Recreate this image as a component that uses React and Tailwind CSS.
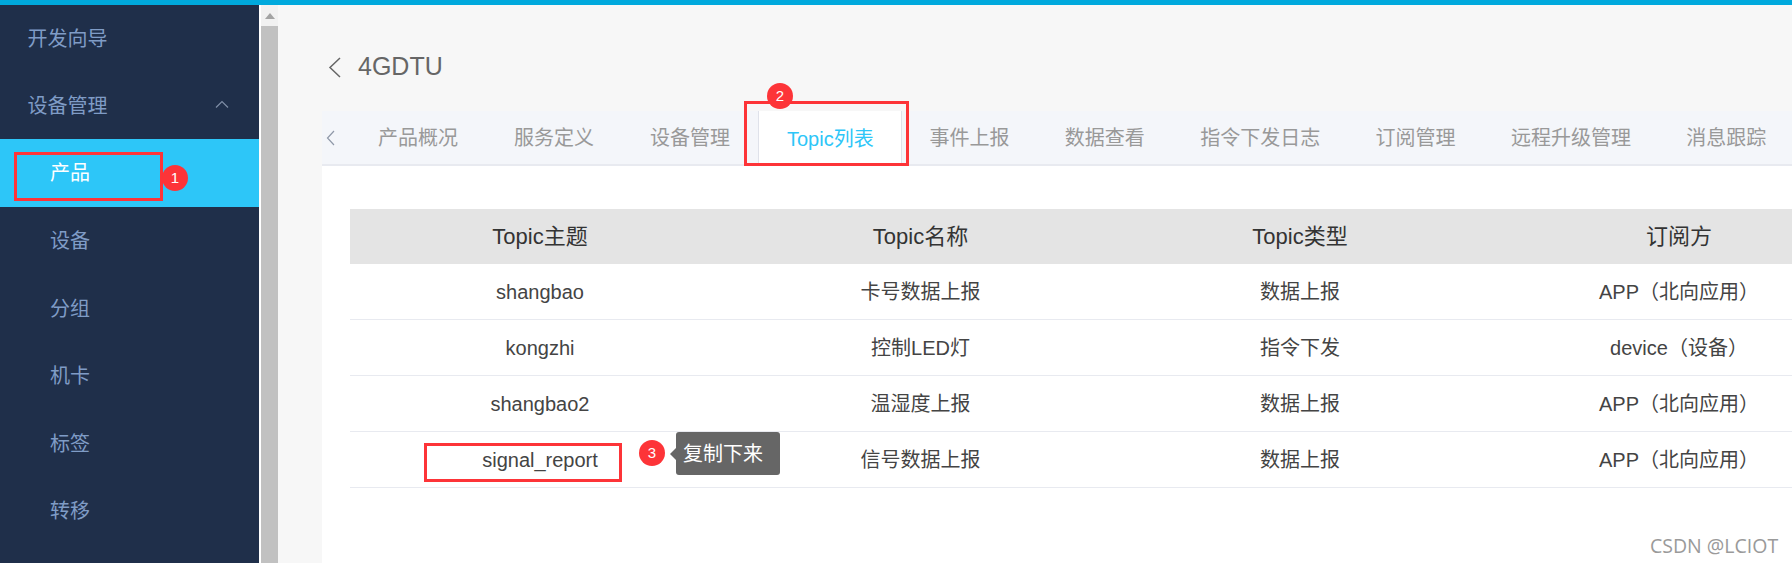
const NAV = [
  { label: '开发向导' },
  { label: '设备管理', open: true },
  { label: '产品', sub: true, active: true },
  { label: '设备', sub: true },
  { label: '分组', sub: true },
  { label: '机卡', sub: true },
  { label: '标签', sub: true },
  { label: '转移', sub: true },
]

const TABS = [
  { label: '产品概况', cls: 'px-[28px]' },
  { label: '服务定义', cls: 'px-[28px]' },
  { label: '设备管理', cls: 'px-[28px]' },
  { label: 'Topic列表', cls: 'pl-[28px] pr-[27px] h-[55px] bg-white text-[#2dc6f8] border-x border-[#dfe2ea]' },
  { label: '事件上报', cls: 'px-[27.7px]' },
  { label: '数据查看', cls: 'px-[27.7px]' },
  { label: '指令下发日志', cls: 'px-[27.7px]' },
  { label: '订阅管理', cls: 'px-[27.7px]' },
  { label: '远程升级管理', cls: 'px-[27.7px]' },
  { label: '消息跟踪', cls: 'px-[27.7px]' },
]

const HEAD = ['Topic主题', 'Topic名称', 'Topic类型', '订阅方']

const ROWS = [
  ['shangbao', '卡号数据上报', '数据上报', 'APP（北向应用）'],
  ['kongzhi', '控制LED灯', '指令下发', 'device（设备）'],
  ['shangbao2', '温湿度上报', '数据上报', 'APP（北向应用）'],
  ['signal_report', '信号数据上报', '数据上报', 'APP（北向应用）'],
]

const FONT = "font-['Liberation_Sans','Noto_Sans_CJK_SC',sans-serif]"
const COLS = 'grid grid-cols-[380px_381px_378px_380px]'

function Badge({ n, className }) {
  return (
    <div className={`absolute w-[26px] h-[26px] rounded-full bg-[#fd3438] text-white text-[15px] flex items-center justify-center ${className}`}>
      {n}
    </div>
  )
}

function RedBox({ className }) {
  return <div className={`absolute border-[3px] border-[#fd3438] ${className}`} />
}

function navClass(item) {
  if (item.active) return 'h-[68px] pl-[50px] bg-[#2dc6f8] text-white'
  if (item.sub) return 'h-[67.5px] pl-[50px] pt-[1px] text-[#7f9cc6]'
  return 'h-[67px] pl-[27.5px] text-[#7f9cc6]'
}

function Sidebar() {
  return (
    <div className="w-[259px] shrink-0 bg-[#1f2f4a]">
      {NAV.map((item) => (
        <div key={item.label} className={`flex items-center justify-between text-[20px] ${navClass(item)}`}>
          {item.label}
          {item.open && (
            <svg className="mr-[30px] mb-[4px]" width="14" height="8" viewBox="0 0 14 8" fill="none" stroke="#7f8ea6" strokeWidth="1.2">
              <path d="M1 7.5 7 1.5l6 6" />
            </svg>
          )}
        </div>
      ))}
    </div>
  )
}

function Scrollbar() {
  return (
    <div className="w-[17px] shrink-0 ml-[2px] flex flex-col bg-[#f1f1f1]">
      <div className="h-[21px] shrink-0 flex items-center justify-center">
        <svg width="10" height="6" viewBox="0 0 10 6" fill="#a3a3a3">
          <path d="M5 0l5 6H0z" />
        </svg>
      </div>
      <div className="flex-1 bg-[#c1c1c1]" />
    </div>
  )
}

function Tabs() {
  return (
    <div className="h-[55px] flex bg-[#f4f6fa] border-b-2 border-[#e8eaf0] text-[20px] text-[#999]">
      <div className="w-[28px] shrink-0 flex items-center pl-[4px]">
        <svg width="9" height="16" viewBox="0 0 9 16" fill="none" stroke="#8f98a8" strokeWidth="1.2">
          <path d="M8 1 1.5 8 8 15" />
        </svg>
      </div>
      {TABS.map((tab) => (
        <div key={tab.label} className={`shrink-0 flex items-center whitespace-nowrap ${tab.cls}`}>
          {tab.label}
        </div>
      ))}
    </div>
  )
}

function TopicTable() {
  return (
    <div className="pt-[43px] pl-[28px]">
      <div className={`${COLS} h-[55px] bg-[#e4e4e4] text-[22px] text-[#333] items-center text-center`}>
        {HEAD.map((h) => <div key={h}>{h}</div>)}
      </div>
      {ROWS.map((row) => (
        <div key={row[0]} className={`${COLS} h-[56px] border-b border-[#e8eaf0] text-[20px] text-[#444] items-center text-center`}>
          {row.map((cell, i) => <div key={i}>{cell}</div>)}
        </div>
      ))}
    </div>
  )
}

export default function App() {
  return (
    <div className={`relative w-[1792px] h-[563px] overflow-hidden bg-white flex flex-col ${FONT}`}>
      <div className="h-[5px] shrink-0 bg-[#00a9dd]" />
      <div className="flex flex-1 min-h-0">
        <Sidebar />
        <Scrollbar />
        <div className="flex-1 min-w-0 bg-[#f7f7f7] pl-[44px] overflow-hidden flex flex-col">
          <div className="h-[106px] shrink-0 flex items-center gap-[17px] text-[25px] text-[#666] pl-[6px] pt-[18px]">
            <svg width="13" height="21" viewBox="0 0 13 21" fill="none" stroke="#666" strokeWidth="1.5">
              <path d="M12 1 2 10.5 12 20" />
            </svg>
            4GDTU
          </div>
          <Tabs />
          <div className="flex-1 bg-white">
            <TopicTable />
          </div>
        </div>
      </div>

      {/* annotations */}
      <RedBox className="left-[14px] top-[152px] w-[149px] h-[49px]" />
      <Badge n="1" className="left-[162px] top-[165px]" />
      <RedBox className="left-[744px] top-[101px] w-[165px] h-[65px]" />
      <Badge n="2" className="left-[767px] top-[83px]" />
      <RedBox className="left-[424px] top-[443px] w-[198px] h-[39px]" />
      <Badge n="3" className="left-[639px] top-[440px]" />
      <div className="absolute left-[676px] top-[432px] w-[104px] h-[43px] rounded-[3px] bg-[#666] text-white text-[20px] flex items-center pl-[7px]">
        <div className="absolute -left-[6px] top-[16px] w-0 h-0 border-y-[6px] border-r-[6px] border-y-transparent border-r-[#666]" />
        复制下来
      </div>
      <div className="absolute left-[1650px] top-[531px] text-[19.5px] text-[#9a9a9a] font-['Open_Sans',sans-serif]">CSDN @LCIOT</div>
    </div>
  )
}
